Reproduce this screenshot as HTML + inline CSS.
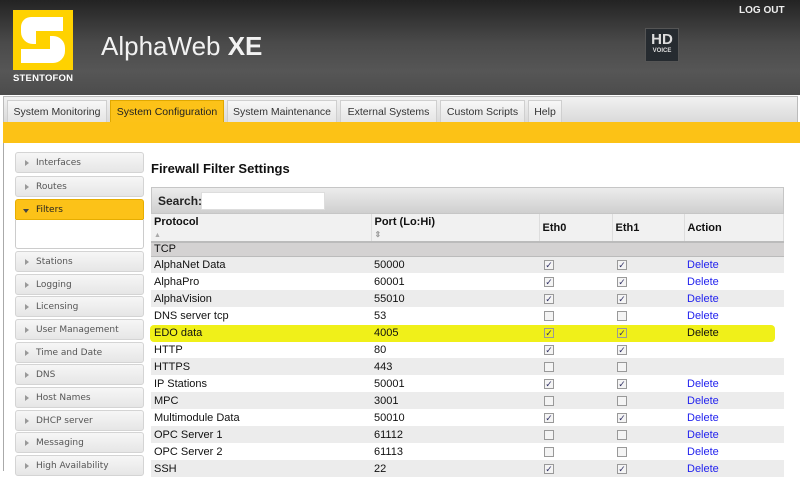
<!DOCTYPE html>
<html><head><style>
*{margin:0;padding:0;box-sizing:border-box}
body{width:800px;height:471px;overflow:hidden;background:#fff;font-family:"Liberation Sans",sans-serif;position:relative}
.hdr{position:absolute;left:0;top:0;width:800px;height:95px;background:linear-gradient(#232323,#4a4a4a 45%,#565656 75%,#4c4c4c)}
.logo{position:absolute;left:13px;top:10px;width:60px;height:60px;background:#ffd200}
.logotxt{position:absolute;left:13px;top:73px;width:60px;text-align:center;font:bold 9.5px "Liberation Sans",sans-serif;color:#fff;letter-spacing:.2px}
.title{position:absolute;left:101px;top:31px;font-size:26px;color:#f2f2f2}
.logout{position:absolute;left:739px;top:5px;font:bold 10px "Liberation Sans";color:#eee}
.hd{position:absolute;left:645px;top:28px;width:34px;height:34px;background:#262b30;border:1px solid #555;color:#ddd;text-align:center;font:bold 15px "Liberation Sans";line-height:16px;padding-top:3px}
.hd small{display:block;font-size:6px;line-height:7px}
.tabbar{position:absolute;left:3px;top:96px;width:795px;height:27px;background:linear-gradient(#f1f1f1,#d9d9d9);border:1px solid #bbb;border-bottom:none}
.tab{position:absolute;top:100px;height:23px;background:linear-gradient(#f7f7f7,#e4e4e4);border:1px solid #cfcfcf;border-bottom:none;font:10.5px "Liberation Sans",sans-serif;color:#333;text-align:center;line-height:22px}
.tab.on{background:#fcc218;border-color:#e0a800;color:#222}
.ybar{position:absolute;left:3px;top:122px;width:797px;height:21px;background:#fcc216}
.lline{position:absolute;left:3px;top:143px;width:1px;height:328px;background:#aaa}
.side{position:absolute;left:15px;width:129px;height:21px;background:linear-gradient(#f6f6f6,#e6e6e6);border:1px solid #d4d4d4;border-radius:3px;font:9px "DejaVu Sans",sans-serif;color:#555;line-height:20px;padding-left:20px}
.side:before{content:"";position:absolute;left:9px;top:7px;border-left:4px solid #999;border-top:3px solid transparent;border-bottom:3px solid transparent}
.side.on{background:#fcc218;border-color:#e6ad00;color:#222;border-radius:3px 3px 0 0}
.side.on:before{left:7px;top:9px;border-top:4px solid #444;border-left:3px solid transparent;border-right:3px solid transparent;border-bottom:0}
h1{position:absolute;left:151px;top:161px;font:bold 13px "Liberation Sans";color:#111}
.srch{position:absolute;left:151px;top:187px;width:633px;height:27px;background:linear-gradient(#ececec,#cfcfcf);border:1px solid #c6c6c6;font:bold 12px "Liberation Sans";padding:6px 0 0 6px;color:#222}
.srch i{position:absolute;left:49px;top:4px;width:124px;height:18px;background:#fff;border:1px solid #ddd}
table{position:absolute;left:151px;top:214px;width:633px;border-collapse:collapse;font:11px "Liberation Sans";color:#111}
th{text-align:left;font-weight:bold;background:#f1f1f1;border-right:1px solid #ddd;border-bottom:2px solid #bbb;height:28px;padding:0 3px;vertical-align:middle;font-size:11px}
td{height:17px;padding:0 3px}
tr.g td{background:#ececec}
tr.grp td{background:#d4d2d2;height:14px;border-bottom:1px solid #bbb}
.cb{display:inline-block;width:10px;height:10px;border:1px solid #999;background:#f4f4f4;font-size:9px;line-height:9px;text-align:center;color:#336;margin-left:2px;vertical-align:middle}
a{color:#2222ee;text-decoration:none}
.hl{position:absolute;left:150px;top:325px;width:625px;height:17px;background:#eeee00;opacity:.9;border-radius:4px}
</style></head><body>
<div class="hdr"></div>
<div class="logo"><svg width="60" height="60" viewBox="0 0 60 60"><path d="M18 7 H50 V21 H23 V26 H40 A12 12 0 0 1 52 38 V41 A12 12 0 0 1 40 53 H8 V39 H37 V34 H20 A12 12 0 0 1 8 22 V17 A10 10 0 0 1 18 7 Z" fill="#fff"/><rect x="23" y="23" width="14" height="14" fill="#ffd200"/></svg></div>
<div class="logotxt">STENTOFON</div>
<div class="title">AlphaWeb <b>XE</b></div>
<div class="logout">LOG OUT</div>
<div class="hd">HD<small>VOICE</small></div>
<div class="tabbar"></div>
<div class="tab" style="left:7px;width:100px">System Monitoring</div>
<div class="tab on" style="left:110px;width:114px">System Configuration</div>
<div class="tab" style="left:227px;width:110px">System Maintenance</div>
<div class="tab" style="left:340px;width:97px">External Systems</div>
<div class="tab" style="left:440px;width:85px">Custom Scripts</div>
<div class="tab" style="left:528px;width:34px">Help</div>
<div class="ybar"></div>
<div class="lline"></div>
<div class="side" style="top:152px">Interfaces</div>
<div class="side" style="top:176px">Routes</div>
<div class="side on" style="top:199px">Filters</div>
<div style="position:absolute;left:15px;top:219px;width:129px;height:30px;border:1px solid #ccc;border-top:none;border-radius:0 0 3px 3px"></div>
<div class="side" style="top:251px">Stations</div>
<div class="side" style="top:274px">Logging</div>
<div class="side" style="top:296px">Licensing</div>
<div class="side" style="top:319px">User Management</div>
<div class="side" style="top:342px">Time and Date</div>
<div class="side" style="top:364px">DNS</div>
<div class="side" style="top:387px">Host Names</div>
<div class="side" style="top:410px">DHCP server</div>
<div class="side" style="top:432px">Messaging</div>
<div class="side" style="top:455px">High Availability</div>
<h1>Firewall Filter Settings</h1>
<div class="srch">Search:<i></i></div>
<div class="hl"></div>
<table>
<tr><th style="width:220px;vertical-align:top;padding-top:2px">Protocol<br><span style="font-size:7px;color:#aaa">▲</span></th><th style="width:168px;vertical-align:top;padding-top:2px">Port (Lo:Hi)<br><span style="font-size:8px;color:#999">⇕</span></th><th style="width:73px">Eth0</th><th style="width:72px">Eth1</th><th>Action</th></tr>
<tr class="grp"><td colspan="5">TCP</td></tr>
<tr class="g"><td>AlphaNet Data</td><td>50000</td><td><span class="cb">✓</span></td><td><span class="cb">✓</span></td><td><a>Delete</a></td></tr>
<tr><td>AlphaPro</td><td>60001</td><td><span class="cb">✓</span></td><td><span class="cb">✓</span></td><td><a>Delete</a></td></tr>
<tr class="g"><td>AlphaVision</td><td>55010</td><td><span class="cb">✓</span></td><td><span class="cb">✓</span></td><td><a>Delete</a></td></tr>
<tr><td>DNS server tcp</td><td>53</td><td><span class="cb"></span></td><td><span class="cb"></span></td><td><a>Delete</a></td></tr>
<tr><td style="background:transparent">EDO data</td><td>4005</td><td><span class="cb" style="background:transparent">✓</span></td><td><span class="cb" style="background:transparent">✓</span></td><td>Delete</td></tr>
<tr><td>HTTP</td><td>80</td><td><span class="cb">✓</span></td><td><span class="cb">✓</span></td><td></td></tr>
<tr class="g"><td>HTTPS</td><td>443</td><td><span class="cb"></span></td><td><span class="cb"></span></td><td></td></tr>
<tr><td>IP Stations</td><td>50001</td><td><span class="cb">✓</span></td><td><span class="cb">✓</span></td><td><a>Delete</a></td></tr>
<tr class="g"><td>MPC</td><td>3001</td><td><span class="cb"></span></td><td><span class="cb"></span></td><td><a>Delete</a></td></tr>
<tr><td>Multimodule Data</td><td>50010</td><td><span class="cb">✓</span></td><td><span class="cb">✓</span></td><td><a>Delete</a></td></tr>
<tr class="g"><td>OPC Server 1</td><td>61112</td><td><span class="cb"></span></td><td><span class="cb"></span></td><td><a>Delete</a></td></tr>
<tr><td>OPC Server 2</td><td>61113</td><td><span class="cb"></span></td><td><span class="cb"></span></td><td><a>Delete</a></td></tr>
<tr class="g"><td>SSH</td><td>22</td><td><span class="cb">✓</span></td><td><span class="cb">✓</span></td><td><a>Delete</a></td></tr>
</table>
</body></html>
